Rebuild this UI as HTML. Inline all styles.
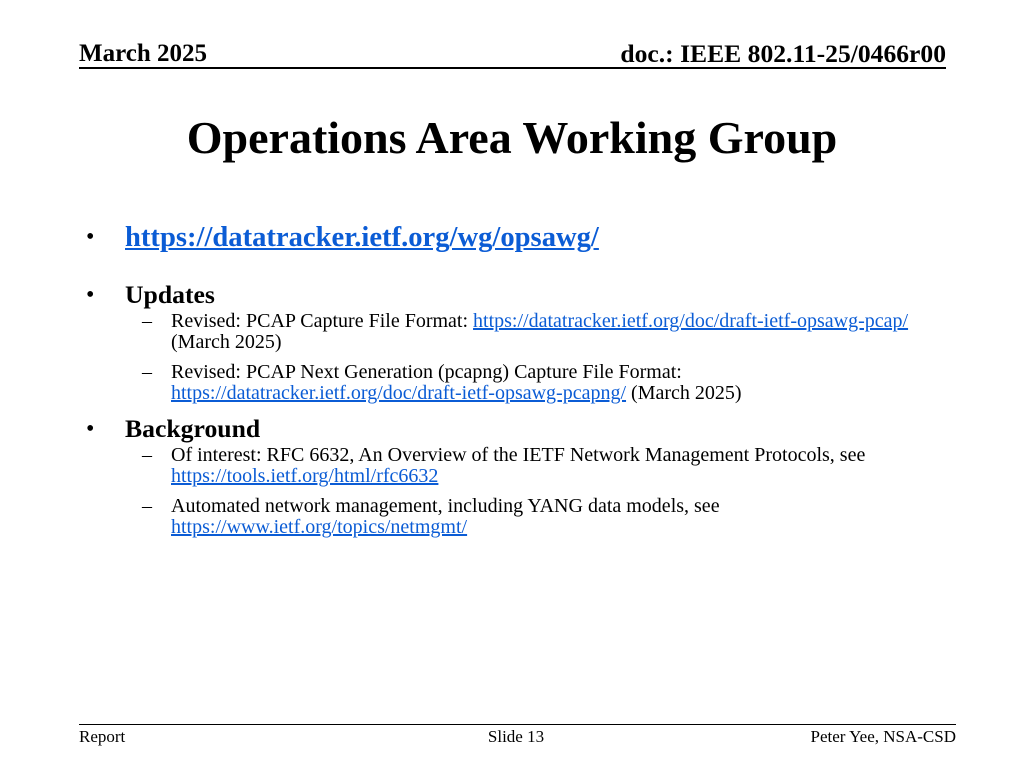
<!DOCTYPE html>
<html><head><meta charset="utf-8"><style>
body{margin:0;width:1024px;height:768px;background:#fff;font-family:"Liberation Serif",serif;color:#000;position:relative;overflow:hidden}
div{position:absolute;white-space:nowrap}
a{color:#0b5cd5;text-decoration:underline}
.b{font-weight:bold}
.s{font-size:20px;line-height:21px}
</style></head><body>
<div class="b" style="left:79px;top:40px;font-size:25px;line-height:28px">March 2025</div>
<div class="b" style="right:78px;top:40px;font-size:25.6px;line-height:28px">doc.: IEEE 802.11-25/0466r00</div>
<div style="left:79px;top:67px;width:867px;height:2px;background:#000"></div>
<div class="b" style="left:0;width:1024px;text-align:center;top:111px;font-size:46px">Operations Area Working Group</div>
<div style="left:86px;top:224px;font-size:24px">•</div>
<div class="b" style="left:125px;top:222px;font-size:28.6px"><a>https://datatracker.ietf.org/wg/opsawg/</a></div>
<div style="left:86px;top:282px;font-size:24px">•</div>
<div class="b" style="left:125px;top:280px;font-size:25.7px">Updates</div>
<div class="s" style="left:142px;top:311px">–</div>
<div class="s" style="left:171px;top:311px">Revised: PCAP Capture File Format: <a>https://datatracker.ietf.org/doc/draft-ietf-opsawg-pcap/</a><br>(March 2025)</div>
<div class="s" style="left:142px;top:362px">–</div>
<div class="s" style="left:171px;top:362px">Revised: PCAP Next Generation (pcapng) Capture File Format:<br><a>https://datatracker.ietf.org/doc/draft-ietf-opsawg-pcapng/</a> (March 2025)</div>
<div style="left:86px;top:416px;font-size:24px">•</div>
<div class="b" style="left:125px;top:414px;font-size:25.7px">Background</div>
<div class="s" style="left:142px;top:445px">–</div>
<div class="s" style="left:171px;top:445px">Of interest: RFC 6632, An Overview of the IETF Network Management Protocols, see<br><a>https://tools.ietf.org/html/rfc6632</a></div>
<div class="s" style="left:142px;top:496px">–</div>
<div class="s" style="left:171px;top:496px">Automated network management, including YANG data models, see<br><a>https://www.ietf.org/topics/netmgmt/</a></div>
<div style="left:79px;top:724px;width:877px;height:1px;background:#000"></div>
<div style="left:79px;top:727px;font-size:17px">Report</div>
<div style="left:0;width:1032px;text-align:center;top:727px;font-size:17px">Slide 13</div>
<div style="right:68px;top:727px;font-size:17px">Peter Yee, NSA-CSD</div>
</body></html>
